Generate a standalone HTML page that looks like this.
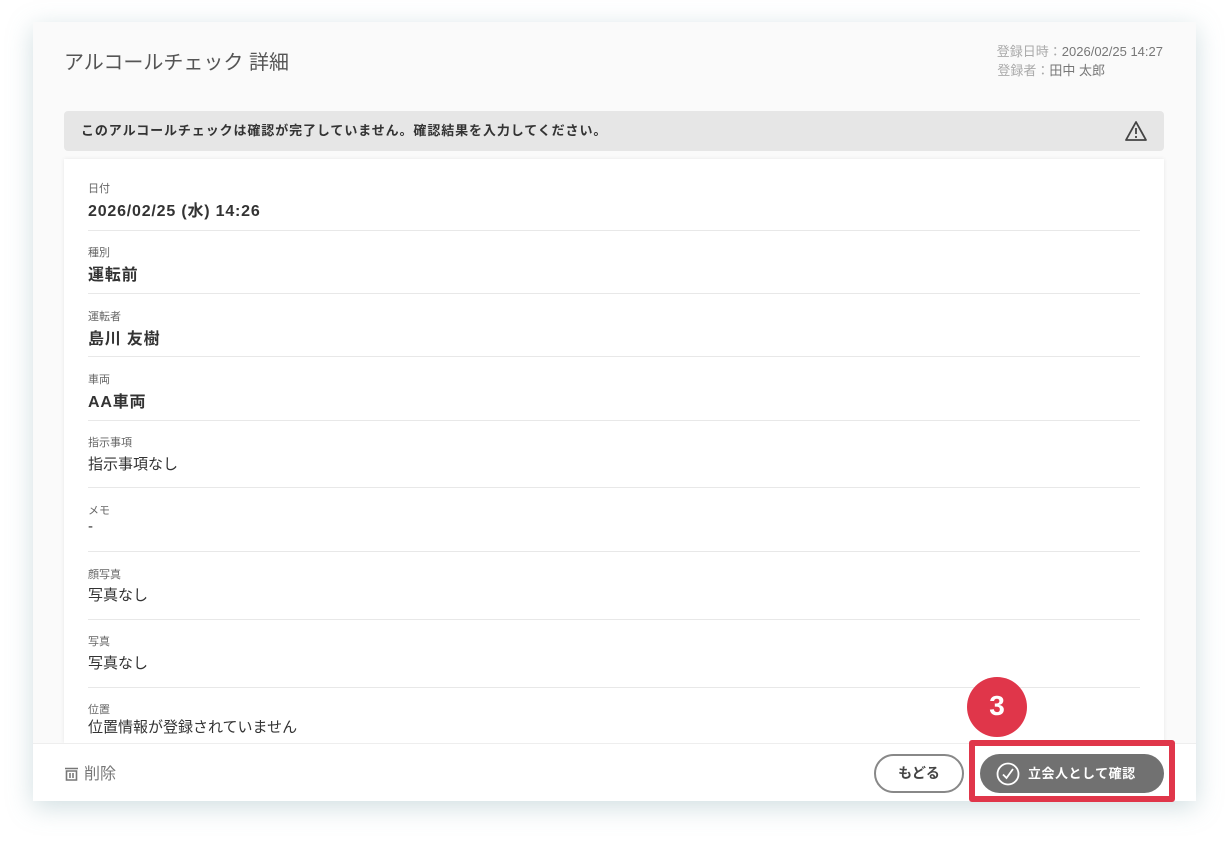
<!DOCTYPE html><html><head><meta charset="utf-8"><style>
*{margin:0;padding:0;box-sizing:border-box}
body{width:1228px;height:844px;background:#fff;font-family:"Liberation Sans","Noto Sans CJK JP",sans-serif;position:relative;overflow:hidden;color:#333}
.modal{position:absolute;left:33px;top:22px;width:1163px;height:779px;background:#fafafa;box-shadow:0 6px 24px rgba(120,160,170,.35)}
.title{position:absolute;left:31px;top:24px;font-size:20px;color:#555}
.meta{position:absolute;right:33px;top:20px;font-size:13px;color:#aaa;text-align:right;line-height:19px}
.meta b{font-weight:normal;color:#777}
.warn{position:absolute;left:31px;top:89px;width:1100px;height:40px;background:#e6e6e6;border-radius:4px;font-size:13px;font-weight:bold;line-height:40px;padding-left:17px;color:#333;letter-spacing:0.9px}
.card{position:absolute;left:31px;top:137px;width:1100px;height:584px;background:#fff;box-shadow:0 0 4px rgba(0,0,0,.08);overflow:hidden}
.l{position:absolute;left:24px;font-size:11px;color:#666}
.v{position:absolute;left:24px;font-size:15px;color:#333}
.vb{font-weight:bold;font-size:16px;letter-spacing:0.8px}
.sep{position:absolute;left:24px;width:1052px;height:1px;background:#e8e8e8}
.foot{position:absolute;left:0;top:721px;width:1163px;height:58px;background:#fff;border-top:1px solid #eee}
.del{position:absolute;left:31px;top:16px;font-size:16px;color:#777}
.back{position:absolute;left:841px;top:10px;width:90px;height:39px;border:2px solid #888;border-radius:20px;text-align:center;line-height:35px;font-size:14px;font-weight:bold;color:#444;background:#fff}
.ok{position:absolute;left:947px;top:10px;width:184px;height:39px;border-radius:20px;background:#717171;color:#fff;font-size:13px;font-weight:bold;line-height:39px;padding-left:48px;letter-spacing:0.5px}
.hl{position:absolute;left:969px;top:740px;width:206px;height:62px;border:6px solid #e0364a;border-radius:3px}
.badge{position:absolute;left:967px;top:677px;width:60px;height:60px;border-radius:50%;background:#e0364a;color:#fff;font-size:28px;font-weight:bold;text-align:center;line-height:58px}
</style></head><body>
<div class="modal">
<div class="title">アルコールチェック 詳細</div>
<div class="meta">登録日時：<b>2026/02/25 14:27</b><br><span style="margin-right:58px">登録者：<b>田中 太郎</b></span></div>
<div class="warn">このアルコールチェックは確認が完了していません。確認結果を入力してください。
<svg style="position:absolute;right:16px;top:8px" width="24" height="24" viewBox="0 0 24 24" fill="none" stroke="#444" stroke-width="1.8"><path d="M12 3L2 21h20z" stroke-linejoin="round"/><path d="M12 9v6M12 17v2"/></svg></div>
<div class="card">
<div class="l" style="top:21px">日付</div><div class="v vb" style="top:38px">2026/02/25 (水) 14:26</div><div class="sep" style="top:71px"></div>
<div class="l" style="top:85px">種別</div><div class="v vb" style="top:102px">運転前</div><div class="sep" style="top:134px"></div>
<div class="l" style="top:149px">運転者</div><div class="v vb" style="top:166px">島川 友樹</div><div class="sep" style="top:197px"></div>
<div class="l" style="top:212px">車両</div><div class="v vb" style="top:229px">AA車両</div><div class="sep" style="top:261px"></div>
<div class="l" style="top:275px">指示事項</div><div class="v" style="top:294px">指示事項なし</div><div class="sep" style="top:328px"></div>
<div class="l" style="top:343px">メモ</div><div class="v" style="top:359px">-</div><div class="sep" style="top:392px"></div>
<div class="l" style="top:407px">顔写真</div><div class="v" style="top:425px">写真なし</div><div class="sep" style="top:460px"></div>
<div class="l" style="top:474px">写真</div><div class="v" style="top:493px">写真なし</div><div class="sep" style="top:528px"></div>
<div class="l" style="top:542px">位置</div><div class="v" style="top:557px">位置情報が登録されていません</div>
</div>
<div class="foot">
<div class="del"><svg width="15" height="15" viewBox="0 0 15 15" style="vertical-align:-2px;margin-right:5px" fill="none" stroke="#777" stroke-width="1.6"><path d="M1 2.5h13M2.5 5h10v9h-10zM6 7v5M9 7v5"/></svg>削除</div>
<div class="back">もどる</div>
<div class="ok"><svg style="position:absolute;left:16px;top:8px" width="24" height="24" viewBox="0 0 24 24" fill="none" stroke="#fff" stroke-width="1.8"><circle cx="12" cy="12" r="10.5"/><path d="M7 12.5l3.5 3.5L17 7"/></svg>立会人として確認</div>
</div>
</div>
<div class="hl"></div>
<div class="badge">3</div>
</body></html>
